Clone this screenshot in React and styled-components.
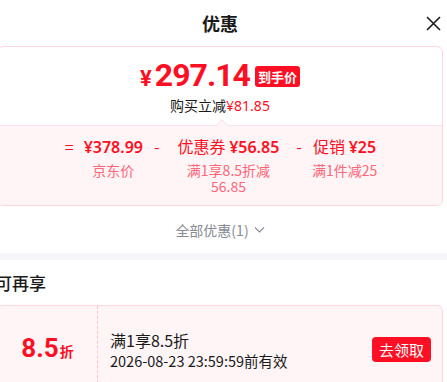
import React from "react"
import styled, { createGlobalStyle } from "styled-components"

const GlobalStyle = createGlobalStyle`
  html, body {
    margin: 0;
    padding: 0;
    background: #fff;
    overflow: hidden;
  }
  body {
    font-family: "Noto Sans CJK SC", "Noto Sans", sans-serif;
    color: #1a1a1a;
  }
`

const Sheet = styled.div`
  width: 454px;
  margin-left: -7px;
`

const Header = styled.div`
  position: relative;
  height: 46px;
  display: flex;
  align-items: center;
  justify-content: center;
`

const Title = styled.h1`
  margin: 0;
  font-size: 18px;
  font-weight: 700;
  line-height: 1;
  color: #1a1a1a;
`

const Close = styled.button`
  position: absolute;
  right: 4px;
  top: 13px;
  width: 20px;
  height: 20px;
  padding: 0;
  border: 0;
  background: none;
  display: flex;
  align-items: center;
  justify-content: center;
`

const PriceCard = styled.div`
  margin: 0 4px;
  border: 1px solid #ffd6df;
  border-radius: 6px;
  overflow: hidden;
`

const Summary = styled.div`
  height: 78px;
  display: flex;
  flex-direction: column;
  align-items: center;
  padding-top: 8px;
  box-sizing: border-box;
`

const PriceLine = styled.div`
  display: flex;
  align-items: center;
  gap: 5px;
  height: 40px;
`

const Price = styled.div`
  color: #ff0f23;
  font-family: Roboto, "Noto Sans", sans-serif;
  font-weight: 700;
  display: flex;
  align-items: baseline;
`

const Yen = styled.span`
  font-size: 22px;
  margin-right: 3px;
`

const Amount = styled.span`
  font-size: 32px;
  letter-spacing: -1px;
`

const Badge = styled.span`
  background: #ff0f23;
  color: #fff;
  font-size: 13px;
  font-weight: 700;
  line-height: 21px;
  padding: 0 3px;
  border-radius: 3px;
  margin-top: 3px;
`

const Saving = styled.div`
  font-size: 14px;
  line-height: 20px;
  color: #1a1a1a;

  & > em {
    font-style: normal;
    color: #ff0f23;
    font-family: "Noto Sans", "Noto Sans CJK SC", sans-serif;
  }
`

const Breakdown = styled.div`
  position: relative;
  height: 80px;
  background: #fff5f7;
  border-top: 1px solid #ffe3ea;
  box-sizing: border-box;
  display: flex;
  justify-content: center;
  align-items: flex-start;
  padding: 8px 8px 0 0;

  &::before {
    content: "";
    position: absolute;
    top: -5px;
    left: calc(50% - 2px);
    width: 7px;
    height: 7px;
    background: #fff5f7;
    border-top: 1px solid #ffe3ea;
    border-left: 1px solid #ffe3ea;
    transform: rotate(45deg);
  }
`

const Term = styled.div`
  display: flex;
  flex-direction: column;
  align-items: center;
  text-align: center;
  padding: 0 ${p => p.$pad || 0}px;
`

const TermValue = styled.div`
  font-size: 16px;
  line-height: 24px;
  color: #ff0f23;
  white-space: nowrap;

  & > b {
    font-family: "Noto Sans", "Noto Sans CJK SC", sans-serif;
    font-weight: 600;
  }
`

const TermNote = styled.div`
  font-size: 14px;
  line-height: 16px;
  color: #ff6678;
  margin-top: 3px;
`

const Operator = styled.div`
  font-size: 16px;
  line-height: 24px;
  color: #ff0f23;
  padding: 0 ${p => p.$space}px;
`

const AllDeals = styled.div`
  height: 47px;
  display: flex;
  align-items: center;
  justify-content: center;
  gap: 5px;
  font-size: 14px;
  color: #888b94;
`

const Band = styled.div`
  height: 7px;
  background: #f5f6fa;
`

const SectionTitle = styled.h2`
  margin: 0;
  height: 45px;
  display: flex;
  align-items: center;
  padding-left: 2px;
  font-size: 17px;
  font-weight: 500;
  color: #1a1a1a;
`

const Coupon = styled.div`
  margin: 0 4px;
  height: 92px;
  display: flex;
  background: #fff5f7;
  border: 1px solid #ffd6df;
  border-radius: 6px;
`

const Discount = styled.div`
  width: 100px;
  flex-shrink: 0;
  border-right: 1px dashed #ffc2cf;
  display: flex;
  align-items: baseline;
  justify-content: center;
  padding-top: 27px;
  box-sizing: border-box;
  color: #ff0f23;
  font-weight: 700;
`

const DiscountNum = styled.span`
  font-family: Roboto, "Noto Sans", sans-serif;
  font-size: 26px;
`

const DiscountUnit = styled.span`
  font-size: 14px;
  margin-left: 1px;
`

const CouponInfo = styled.div`
  flex: 1;
  display: flex;
  flex-direction: column;
  justify-content: center;
  padding-left: 12px;
  padding-bottom: 4px;
`

const CouponName = styled.div`
  font-size: 16px;
  line-height: 22px;
  color: #1a1a1a;
`

const CouponDate = styled.div`
  font-size: 14.5px;
  line-height: 20px;
  color: #1a1a1a;
`

const ClaimButton = styled.button`
  align-self: center;
  margin-right: 11px;
  margin-bottom: 6px;
  height: 25px;
  padding: 0 7px;
  border: 0;
  border-radius: 4px;
  background: #ff0f23;
  color: #fff;
  font-family: "Noto Sans CJK SC", sans-serif;
  font-size: 15px;
`

const terms = [
  { op: "=", space: 10 },
  { label: "", amount: "¥378.99", note: ["京东价"] },
  { op: "-", space: 11 },
  { label: "优惠券 ", amount: "¥56.85", note: ["满1享8.5折减", "56.85"], pad: 7 },
  { op: "-", space: 10 },
  { label: "促销 ", amount: "¥25", note: ["满1件减25"] },
]

const App = () => {
  return (
    <>
      <GlobalStyle />
      <Sheet>
        <Header>
          <Title>优惠</Title>
          <Close aria-label="关闭">
            <svg width="15" height="15" viewBox="0 0 15 15">
              <path d="M1 1L14 14M14 1L1 14" stroke="#1a1a1a" strokeWidth="1.6" />
            </svg>
          </Close>
        </Header>

        <PriceCard>
          <Summary>
            <PriceLine>
              <Price>
                <Yen>¥</Yen>
                <Amount>297.14</Amount>
              </Price>
              <Badge>到手价</Badge>
            </PriceLine>
            <Saving>
              购买立减<em>¥81.85</em>
            </Saving>
          </Summary>
          <Breakdown>
            {terms.map((t, i) =>
              t.op ? (
                <Operator key={i} $space={t.space}>
                  {t.op}
                </Operator>
              ) : (
                <Term key={i} $pad={t.pad}>
                  <TermValue>
                    {t.label}
                    <b>{t.amount}</b>
                  </TermValue>
                  <TermNote>
                    {t.note.map((line, j) => (
                      <div key={j}>{line}</div>
                    ))}
                  </TermNote>
                </Term>
              )
            )}
          </Breakdown>
        </PriceCard>

        <AllDeals>
          全部优惠(1)
          <svg width="11" height="11" viewBox="0 0 11 11">
            <path d="M1 3.5L5.5 8L10 3.5" fill="none" stroke="#888b94" strokeWidth="1.1" />
          </svg>
        </AllDeals>

        <Band />

        <SectionTitle>可再享</SectionTitle>

        <Coupon>
          <Discount>
            <DiscountNum>8.5</DiscountNum>
            <DiscountUnit>折</DiscountUnit>
          </Discount>
          <CouponInfo>
            <CouponName>满1享8.5折</CouponName>
            <CouponDate>2026-08-23 23:59:59前有效</CouponDate>
          </CouponInfo>
          <ClaimButton>去领取</ClaimButton>
        </Coupon>
      </Sheet>
    </>
  )
}

export default App
